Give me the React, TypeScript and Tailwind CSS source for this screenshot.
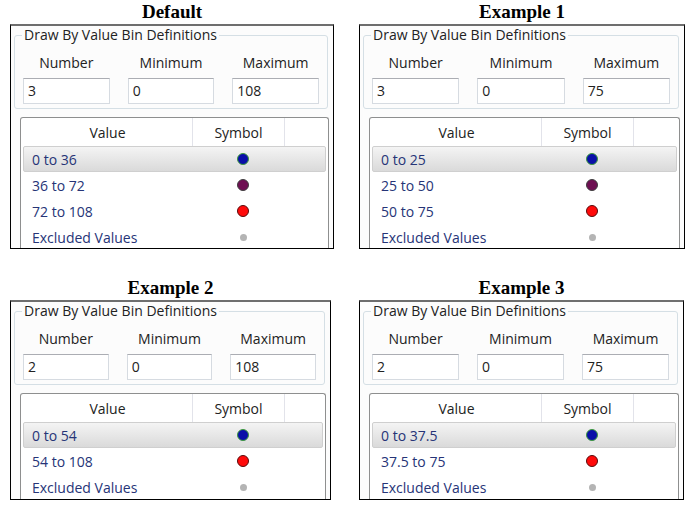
type Bin = { label: string; dot: "blue" | "purple" | "red" }

type Example = {
  title: string
  number: string
  minimum: string
  maximum: string
  bins: Bin[]
}

const examples: Example[] = [
  {
    title: "Default",
    number: "3",
    minimum: "0",
    maximum: "108",
    bins: [
      { label: "0 to 36", dot: "blue" },
      { label: "36 to 72", dot: "purple" },
      { label: "72 to 108", dot: "red" },
    ],
  },
  {
    title: "Example 1",
    number: "3",
    minimum: "0",
    maximum: "75",
    bins: [
      { label: "0 to 25", dot: "blue" },
      { label: "25 to 50", dot: "purple" },
      { label: "50 to 75", dot: "red" },
    ],
  },
  {
    title: "Example 2",
    number: "2",
    minimum: "0",
    maximum: "108",
    bins: [
      { label: "0 to 54", dot: "blue" },
      { label: "54 to 108", dot: "red" },
    ],
  },
  {
    title: "Example 3",
    number: "2",
    minimum: "0",
    maximum: "75",
    bins: [
      { label: "0 to 37.5", dot: "blue" },
      { label: "37.5 to 75", dot: "red" },
    ],
  },
]

function Dot({ kind }: { kind: Bin["dot"] | "excluded" }) {
  if (kind === "blue") return <span className="block h-[12px] w-[12px] rounded-full border-[1.5px] border-[#3d9a3d] bg-[#0a0fa8]" />
  if (kind === "purple") return <span className="block h-[12px] w-[12px] rounded-full border-[1.5px] border-[#3f3f3f] bg-[#6e0f52]" />
  if (kind === "red") return <span className="block h-[12px] w-[12px] rounded-full border-[1.5px] border-[#5a0a0a] bg-[#ff0a0a]" />
  return <span className="block h-[7px] w-[7px] rounded-full bg-[#b4b4b4]" />
}

function Field({ label, value }: { label: string; value: string }) {
  return (
    <div className="flex flex-col">
      <div className="h-[25px] text-center text-[14px] leading-[25px] text-[#222]">{label}</div>
      <div className="mt-[3px] h-[26px] border border-[#d6dbe1] border-t-[#abadb3] bg-white px-[4px] text-[14px] leading-[24px] text-[#222]">
        {value}
      </div>
    </div>
  )
}

function Panel({ ex, height }: { ex: Example; height: string }) {
  const rows: { label: string; dot: Bin["dot"] | "excluded" }[] = [
    ...ex.bins,
    { label: "Excluded Values", dot: "excluded" },
  ]
  return (
    <div className="flex flex-col">
      <div className="h-6 text-center font-['Liberation_Serif',serif] text-[19px] font-bold leading-6 text-black">{ex.title}</div>
      <div
        className={`${height} overflow-hidden border border-black border-t-2 border-t-[#6e6e6e] bg-[#fcfcfc] pr-[4px] pl-[3px] pt-[9px]`}
      >
        {/* group box */}
        <div className="relative mr-[1px] rounded-[3px] border border-[#d5dfe5] px-[8px] pb-[4px] pt-[14px]">
          <span className="absolute -top-[11px] left-[7px] bg-[#fcfcfc] px-[2px] text-[14px] leading-[20px] text-[#222]">
            Draw By Value Bin Definitions
          </span>
          <div className="grid grid-cols-3 gap-x-[18px]">
            <Field label="Number" value={ex.number} />
            <Field label="Minimum" value={ex.minimum} />
            <Field label="Maximum" value={ex.maximum} />
          </div>
        </div>

        {/* bins grid */}
        <div className="ml-[6px] mt-[8px] h-[200px] rounded-t-[3px] border border-b-0 border-[#8e8f8f] bg-white px-[2px]">
          <div className="flex h-[28px] text-[14px] text-[#222]">
            <div className="flex w-[170px] items-center justify-center border-r border-[#e2e3ea]">Value</div>
            <div className="flex w-[92px] items-center justify-center border-r border-[#e2e3ea]">Symbol</div>
            <div className="flex-1" />
          </div>
          {rows.map((r, i) => (
            <div
              key={r.label}
              className={`flex h-[26px] items-center text-[14px] text-[#263477] ${
                i === 0
                  ? "rounded-[2px] border border-[#cfcfcf] bg-gradient-to-b from-[#f4f4f4] to-[#dadada] text-[#1e2a66]"
                  : "border border-transparent"
              }`}
            >
              <div className="w-[168px] pl-[8px]">{r.label}</div>
              <div className="flex w-[92px] items-center justify-center pl-[10px]">
                <Dot kind={r.dot} />
              </div>
            </div>
          ))}
        </div>
      </div>
    </div>
  )
}

export default function App() {
  return (
    <div className="h-[513px] w-[695px] bg-white font-['Open_Sans',sans-serif]">
      <div className="grid grid-cols-[324px_326px] gap-x-[25px] pl-[10px]">
        <Panel ex={examples[0]} height="h-[225px]" />
        <Panel ex={examples[1]} height="h-[225px]" />
      </div>
      <div className="mt-[27px] grid grid-cols-[321px_325px] gap-x-[28px] pl-[10px]">
        <Panel ex={examples[2]} height="h-[200px]" />
        <Panel ex={examples[3]} height="h-[200px]" />
      </div>
    </div>
  )
}
